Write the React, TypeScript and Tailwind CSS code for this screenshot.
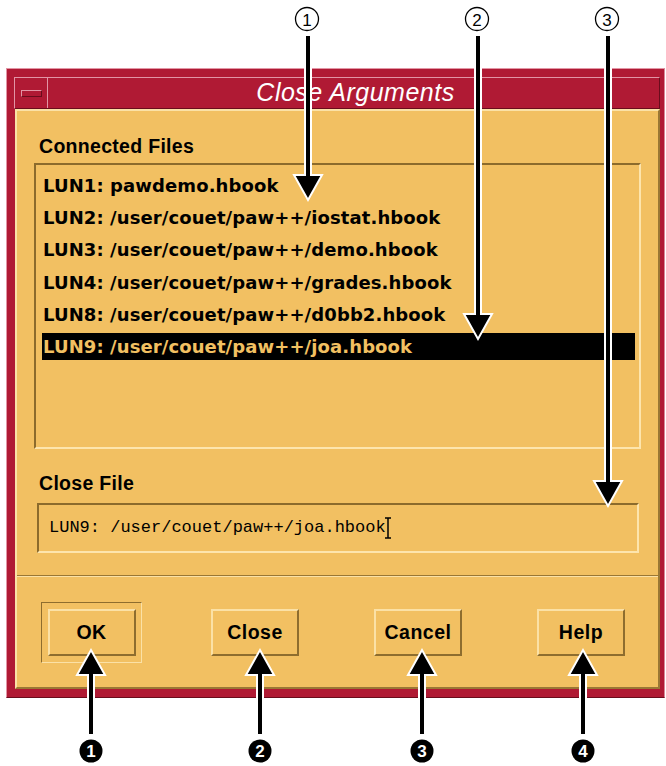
import React from "react";

const files = [
  "LUN1: pawdemo.hbook",
  "LUN2: /user/couet/paw++/iostat.hbook",
  "LUN3: /user/couet/paw++/demo.hbook",
  "LUN4: /user/couet/paw++/grades.hbook",
  "LUN8: /user/couet/paw++/d0bb2.hbook",
  "LUN9: /user/couet/paw++/joa.hbook",
];

const selected = 5;

// annotation arrows drawn over the dialog
const downArrows = [
  { x: 308, tip: 200, label: "1" },
  { x: 478, tip: 339, label: "2" },
  { x: 608, tip: 506, label: "3" },
];

const upArrows = [
  { x: 91, label: "1" },
  { x: 260, label: "2" },
  { x: 422, label: "3" },
  { x: 583, label: "4" },
];

function downPoints(x: number, y0: number, tip: number) {
  const b = tip - 25;
  return `${x - 3},${y0} ${x + 3},${y0} ${x + 3},${b} ${x + 14},${b} ${x},${tip} ${x - 14},${b} ${x - 3},${b}`;
}

function upPoints(x: number, tip: number, y1: number) {
  const b = tip + 25;
  return `${x - 3},${y1} ${x + 3},${y1} ${x + 3},${b} ${x + 14},${b} ${x},${tip} ${x - 14},${b} ${x - 3},${b}`;
}

function Annotations() {
  return (
    <svg
      className="absolute inset-0 pointer-events-none"
      width="666"
      height="766"
      viewBox="0 0 666 766"
    >
      {downArrows.map((a) => (
        <g key={a.label}>
          <circle cx={a.x - 1} cy={19} r={11.5} fill="white" stroke="black" strokeWidth={1.3} />
          <text
            x={a.x - 1}
            y={25.5}
            textAnchor="middle"
            fontSize={17}
            fontFamily="'Liberation Sans', Arial, sans-serif"
            fill="black"
          >
            {a.label}
          </text>
          <polygon
            points={downPoints(a.x, 35, a.tip)}
            fill="black"
            stroke="white"
            strokeWidth={2}
            strokeMiterlimit={10}
          />
        </g>
      ))}
      {upArrows.map((a) => (
        <g key={a.label}>
          <polygon
            points={upPoints(a.x, 650, 735)}
            fill="black"
            stroke="white"
            strokeWidth={2}
            strokeMiterlimit={10}
          />
          <circle cx={a.x} cy={751} r={11.5} fill="black" />
          <text
            x={a.x}
            y={757}
            textAnchor="middle"
            fontSize={17}
            fontWeight={700}
            fontFamily="'Liberation Sans', Arial, sans-serif"
            fill="white"
          >
            {a.label}
          </text>
        </g>
      ))}
    </svg>
  );
}

function MotifButton({ label }: { label: string }) {
  return (
    <div className="w-[88px] h-[47px] flex items-center justify-center border-2 border-t-[#fbe1a6] border-l-[#fbe1a6] border-r-[#8e6d2e] border-b-[#8e6d2e] bg-[#f2c062] text-[19.5px] font-bold tracking-[0.5px] text-black">
      {label}
    </div>
  );
}

export default function App() {
  return (
    <div
      className="relative w-[666px] h-[766px] bg-white overflow-hidden pt-[68px]"
      style={{ fontFamily: "'Liberation Sans', Arial, sans-serif" }}
    >
      {/* Window frame */}
      <div className="w-[659px] ml-[6px] border border-t-[#e295a5] border-l-[#e295a5] border-r-[#d98898] border-b-[#6a0c1c] bg-[#b01a34] pt-[8px] pb-[8px] pl-[7px] pr-[4px]">
        {/* Title bar */}
        <div className="flex h-[32px] border-t border-l border-[#e295a5] border-b border-b-[#6a0c1c] border-r border-r-[#6a0c1c]">
          <div className="w-[33px] flex items-center justify-center border-r border-[#e295a5]">
            <div className="w-[21px] h-[7px] border border-t-[#e295a5] border-l-[#e295a5] border-r-[#6a0c1c] border-b-[#6a0c1c]" />
          </div>
          <div className="flex-1 flex items-center justify-center pl-[4px] text-white italic text-[25px] tracking-[0.5px]">
            Close Arguments
          </div>
        </div>

        {/* Dialog body */}
        <div className="ml-[1px] border-2 border-t-[#fbe1a6] border-l-[#fbe1a6] border-r-[#9a7734] border-b-[#9a7734] bg-[#f2c062] pb-[24px]">
          <div className="mt-[24px] pl-[22px] h-[22px] leading-[22px] text-[19.5px] font-bold tracking-[0.3px] text-black">
            Connected Files
          </div>

          {/* File list */}
          <div className="mt-[6px] mx-[17px] h-[286px] border-2 border-t-[#8c6b2c] border-l-[#8c6b2c] border-r-[#fde5ad] border-b-[#fde5ad] pt-[6.5px] pl-[6px] pr-[4px]">
            <div
              className="flex flex-col gap-[5.4px] text-[18px] font-bold tracking-[0.1px]"
              style={{ fontFamily: "'DejaVu Sans', Verdana, sans-serif" }}
            >
              {files.map((f, i) => (
                <div
                  key={f}
                  className={
                    i === selected
                      ? "h-[27px] flex items-center pl-[1px] bg-black text-[#f2c062]"
                      : "h-[27px] flex items-center pl-[1px] text-black"
                  }
                >
                  {f}
                </div>
              ))}
            </div>
          </div>

          <div className="mt-[23px] pl-[22px] h-[22px] leading-[22px] text-[19.5px] font-bold tracking-[0.3px] text-black">
            Close File
          </div>

          {/* Text field */}
          <div className="mt-[9px] ml-[20px] mr-[19px] h-[50px] flex items-center border-2 border-t-[#8c6b2c] border-l-[#8c6b2c] border-r-[#fde5ad] border-b-[#fde5ad] pl-[10px]">
            <span
              className="text-[17px] text-black"
              style={{ fontFamily: "'Liberation Mono', 'Courier New', monospace" }}
            >
              LUN9: /user/couet/paw++/joa.hbook
            </span>
            <svg width="6" height="22" viewBox="0 0 6 22" className="ml-[-1px]">
              <path d="M0 1h6M3 1v20M0 21h6" stroke="black" strokeWidth="1.5" fill="none" />
            </svg>
          </div>

          {/* Separator */}
          <div className="mt-[22px] border-t border-[#9a7734] border-b border-b-[#fbe1a6]" />

          {/* Buttons */}
          <div className="mt-[25px] flex items-center pl-[24px]">
            <div className="w-[101px] h-[61px] flex items-center justify-center border border-t-[#8e6d2e] border-l-[#8e6d2e] border-r-[#fbe1a6] border-b-[#fbe1a6]">
              <MotifButton label="OK" />
            </div>
            <div className="ml-[69px]">
              <MotifButton label="Close" />
            </div>
            <div className="ml-[75px]">
              <MotifButton label="Cancel" />
            </div>
            <div className="ml-[75px]">
              <MotifButton label="Help" />
            </div>
          </div>
        </div>
      </div>

      <Annotations />
    </div>
  );
}
